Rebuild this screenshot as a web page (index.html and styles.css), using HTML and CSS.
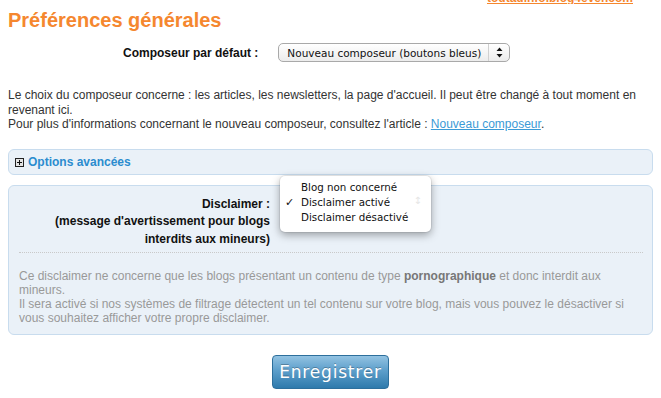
FILE: index.html
```html
<!DOCTYPE html>
<html lang="fr">
<head>
  <meta charset="UTF-8" />
  <meta name="viewport" content="width=device-width, initial-scale=1.0" />
  <title>Préférences générales</title>
  <link rel="stylesheet" href="styles.css">
</head>
<body>
  <div class="site-link"><a href="#">toutaulnfo.blog4ever.com</a></div>
  <h1 class="title">Préférences générales</h1>

  <div class="composer-row">
    <label class="row-label">Composeur par défaut :</label>
    <div class="fake-select composer-select">
      <span class="fake-select-value">Nouveau composeur (boutons bleus)</span>
      <span class="fake-select-arrows">
        <svg width="7" height="11" viewBox="0 0 7 11"><path d="M3.5 0.5 L6.5 4 L0.5 4 Z M0.5 7 L6.5 7 L3.5 10.5 Z" fill="#111"/></svg>
      </span>
    </div>
  </div>

  <p class="intro">
    Le choix du composeur concerne : les articles, les newsletters, la page d'accueil. Il peut être changé à tout moment en revenant ici.<br>
    Pour plus d'informations concernant le nouveau composeur, consultez l'article : <a class="link" href="#">Nouveau composeur</a>.
  </p>

  <div class="panel options-panel">
    <span class="toggle-icon">
      <svg width="9" height="9" viewBox="0 0 9 9"><rect x="0.5" y="0.5" width="8" height="8" fill="#e4e4e4" stroke="#222"/><path d="M2 4.5 H7 M4.5 2 V7" stroke="#111" stroke-width="1"/></svg>
    </span>
    <a class="options-link" href="#">Options avancées</a>
  </div>

  <div class="panel disclaimer-panel">
    <div class="disclaimer-row">
      <div class="disclaimer-label">Disclaimer :<br>(message d'avertissement pour blogs<br>interdits aux mineurs)</div>
      <div class="disclaimer-field">
        <ul class="select-menu">
          <li>Blog non concerné</li>
          <li class="checked">Disclaimer activé</li>
          <li>Disclaimer désactivé</li>
          <span class="menu-ghost-arrows">&#x2195;</span>
        </ul>
      </div>
    </div>
    <div class="dotted"></div>
    <p class="disclaimer-note">
      Ce disclaimer ne concerne que les blogs présentant un contenu de type <b>pornographique</b> et donc interdit aux mineurs.<br>
      Il sera activé si nos systèmes de filtrage détectent un tel contenu sur votre blog, mais vous pouvez le désactiver si vous souhaitez afficher votre propre disclaimer.
    </p>
  </div>

  <div class="actions">
    <button class="save-button">Enregistrer</button>
  </div>
</body>
</html>
```

FILE: styles.css
```css
body {
  margin: 0;
  padding: 0 8px;
  background-color: #fff;
  color: #333;
  font-family: "Liberation Sans", Arial, sans-serif;
  font-size: 12px;
}
.site-link {
  height: 4px;
  overflow: hidden;
  line-height: 14px;
  text-align: right;
  padding-right: 20px;
}
.site-link a {
  display: block;
  margin-top: -9px;
  color: #f5872f;
  font-weight: bold;
}
.title {
  margin: 4px 0 0;
  font-size: 20px;
  line-height: 24px;
  color: #f5872f;
}
.composer-row {
  display: flex;
  align-items: center;
  gap: 20px;
  margin-top: 11px;
  padding-left: 115px;
}
.row-label {
  font-weight: bold;
  color: #111;
}
.fake-select {
  display: flex;
  align-items: center;
  box-sizing: border-box;
  height: 19px;
  border: 1px solid #a9a9a9;
  border-radius: 5px;
  background: linear-gradient(#ffffff, #ececec);
  font-family: "DejaVu Sans", sans-serif;
  font-size: 10.5px;
  color: #111;
}
.composer-select {
  width: 232px;
}
.fake-select-value {
  flex: 1;
  padding-left: 8px;
}
.fake-select-arrows {
  display: flex;
  align-items: center;
  justify-content: center;
  width: 20px;
  height: 100%;
  border-left: 1px solid #d0d0d0;
}
.intro {
  margin: 26px 0 0;
  line-height: 14.5px;
}
.link {
  color: #3a9ad6;
}
.panel {
  box-sizing: border-box;
  border: 1px solid #c8dcee;
  border-radius: 6px;
  background-color: #eaf1f8;
}
.options-panel {
  display: flex;
  align-items: center;
  gap: 4px;
  height: 26px;
  margin-top: 17px;
  padding: 0 6px;
}
.toggle-icon {
  display: flex;
  margin-top: 1px;
}
.options-link {
  color: #2b8ccf;
  font-weight: bold;
  text-decoration: none;
}
.disclaimer-panel {
  margin-top: 10px;
  padding: 10px 9px 9px 10px;
}
.disclaimer-row {
  display: flex;
  gap: 10px;
}
.disclaimer-label {
  width: 251px;
  text-align: right;
  font-weight: bold;
  line-height: 17.5px;
  color: #111;
}
.disclaimer-field {
  position: relative;
  width: 151px;
}
.select-menu {
  position: absolute;
  top: -20px;
  left: 0;
  width: 151px;
  margin: 0;
  padding: 4px 0 7px;
  list-style: none;
  box-sizing: border-box;
  height: 56px;
  background-color: #fff;
  border-radius: 5px;
  box-shadow: 0 3px 9px rgba(0, 0, 0, 0.35), 0 0 0 1px rgba(0, 0, 0, 0.06);
  font-family: "DejaVu Sans", sans-serif;
  font-size: 10.3px;
  color: #111;
}
.select-menu li {
  position: relative;
  line-height: 15px;
  padding-left: 21px;
}
.select-menu .checked::before {
  content: "\2713";
  position: absolute;
  left: 5px;
  font-size: 11px;
}
.menu-ghost-arrows {
  position: absolute;
  right: 9px;
  top: 19px;
  font-size: 10px;
  color: #e6e6e6;
}
.dotted {
  margin-top: 4px;
  border-top: 1px dotted #c9c9c9;
}
.disclaimer-note {
  margin: 16px 0 0;
  line-height: 14px;
  color: #999;
}
.disclaimer-note b {
  color: #777;
}
.actions {
  display: flex;
  justify-content: center;
  margin-top: 20px;
}
.save-button {
  width: 117px;
  height: 34px;
  border: 1px solid #2d6f9c;
  border-radius: 4px;
  background: linear-gradient(#93c3e2, #5d9fcb 45%, #2e7aac);
  color: #fff;
  font-family: "DejaVu Sans", sans-serif;
  font-size: 17px;
  letter-spacing: 0.8px;
  text-shadow: 0 -1px 0 rgba(0, 0, 0, 0.25);
  cursor: pointer;
}
```
